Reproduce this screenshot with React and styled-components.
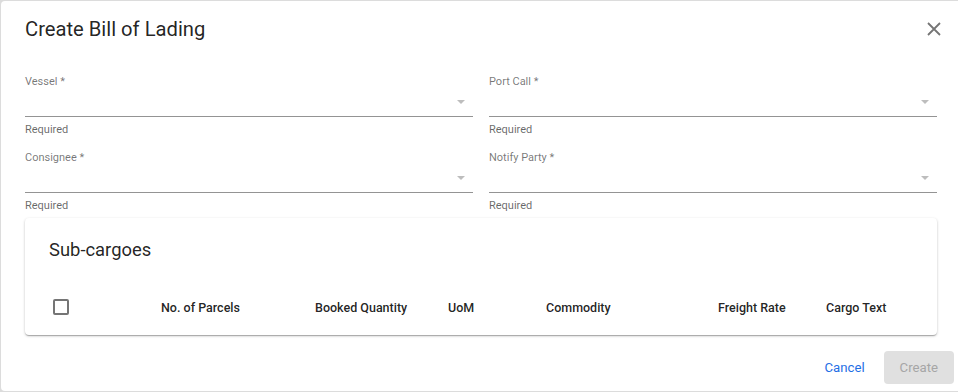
import React from "react";
import styled, { createGlobalStyle } from "styled-components";

const GlobalStyle = createGlobalStyle`
  html, body {
    margin: 0;
    padding: 0;
    background: #dcdcdc;
    overflow: hidden;
    font-family: Roboto, "Liberation Sans", sans-serif;
  }
`;

const Dialog = styled.div`
  margin: 1px 0 0 1px;
  width: 961px;
  height: 390px;
  background: #fff;
  border-radius: 4px;
  box-sizing: border-box;
  display: flex;
  flex-direction: column;
`;

const Header = styled.div`
  display: flex;
  align-items: center;
  justify-content: space-between;
  padding: 16px 24px;
`;

const Title = styled.h2`
  margin: 0;
  font-size: 20.2px;
  line-height: 24px;
  font-weight: 400;
  color: rgba(0, 0, 0, 0.87);
`;

const CloseButton = styled.button`
  border: 0;
  background: none;
  padding: 0;
  margin-right: -8px;
  width: 24px;
  height: 24px;
  display: flex;
  align-items: center;
  justify-content: center;
  cursor: pointer;
`;

const Content = styled.div`
  padding: 17px 24px 8px;
`;

const FieldGrid = styled.div`
  display: grid;
  grid-template-columns: 1fr 1fr;
  column-gap: 16px;
  row-gap: 13px;
  width: 912px;
`;

const Field = styled.div`
  display: flex;
  flex-direction: column;
`;

const Label = styled.label`
  font-size: 11px;
  line-height: 16px;
  color: rgba(0, 0, 0, 0.54);
`;

const SelectBox = styled.div`
  position: relative;
  height: 26px;
  border-bottom: 1px solid rgba(0, 0, 0, 0.42);
`;

const Arrow = styled.span`
  position: absolute;
  right: 8px;
  top: 10px;
  width: 0;
  height: 0;
  border-left: 4px solid transparent;
  border-right: 4px solid transparent;
  border-top: 4px solid #bdbdbd;
`;

const Helper = styled.span`
  margin-top: 6px;
  font-size: 11px;
  line-height: 14px;
  color: rgba(0, 0, 0, 0.6);
`;

const Card = styled.div`
  margin-top: 5px;
  width: 912px;
  background: #fff;
  border-radius: 4px;
  box-shadow: 0 1px 3px rgba(0, 0, 0, 0.2), 0 1px 1px rgba(0, 0, 0, 0.14),
    0 2px 1px -1px rgba(0, 0, 0, 0.12);
`;

const CardTitle = styled.h3`
  margin: 0;
  padding: 20px 24px 0;
  font-size: 18.4px;
  line-height: 24px;
  font-weight: 400;
  color: rgba(0, 0, 0, 0.87);
`;

const HeadRow = styled.div`
  margin-top: 17px;
  height: 56px;
  display: grid;
  grid-template-columns: 120px 154px 133px 98px 172px 108px 1fr;
  align-items: center;
`;

const HeadCell = styled.div`
  padding: 0 16px;
  font-size: 12.5px;
  font-weight: 500;
  color: rgba(0, 0, 0, 0.87);
  white-space: nowrap;
`;

const CheckCell = styled.div`
  padding-left: 28px;
  display: flex;
  align-items: center;
`;

const CheckBox = styled.span`
  width: 16px;
  height: 16px;
  box-sizing: border-box;
  border: 2px solid #757575;
  border-radius: 2px;
`;

const Footer = styled.div`
  display: flex;
  justify-content: flex-end;
  gap: 7px;
  padding: 8px;
`;

const Button = styled.button`
  min-width: 64px;
  height: 33px;
  padding: 0 ${(p) => (p.$filled ? "16px" : "8px")};
  border: 0;
  border-radius: 4px;
  font-family: Roboto, "Liberation Sans", sans-serif;
  font-size: 13.2px;
  font-weight: 400;
  background: ${(p) => (p.$filled ? "#e0e0e0" : "transparent")};
  color: ${(p) => (p.$filled ? "#a6a6a6" : "#1f6fe5")};
  cursor: ${(p) => (p.$filled ? "default" : "pointer")};
`;

const fields = ["Vessel", "Port Call", "Consignee", "Notify Party"];
const columns = [
  "No. of Parcels",
  "Booked Quantity",
  "UoM",
  "Commodity",
  "Freight Rate",
  "Cargo Text",
];

const App = () => {
  return (
    <>
      <GlobalStyle />
      <Dialog>
        <Header>
          <Title>Create Bill of Lading</Title>
          <CloseButton aria-label="close">
            <svg width="14" height="14" viewBox="0 0 14 14">
              <path
                d="M1 1 L13 13 M13 1 L1 13"
                stroke="#757575"
                strokeWidth="1.8"
              />
            </svg>
          </CloseButton>
        </Header>
        <Content>
          <FieldGrid>
            {fields.map((f) => (
              <Field key={f}>
                <Label>{f} *</Label>
                <SelectBox>
                  <Arrow />
                </SelectBox>
                <Helper>Required</Helper>
              </Field>
            ))}
          </FieldGrid>
          <Card>
            <CardTitle>Sub-cargoes</CardTitle>
            <HeadRow>
              <CheckCell>
                <CheckBox />
              </CheckCell>
              {columns.map((c) => (
                <HeadCell key={c}>{c}</HeadCell>
              ))}
            </HeadRow>
          </Card>
        </Content>
        <Footer>
          <Button>Cancel</Button>
          <Button $filled disabled>
            Create
          </Button>
        </Footer>
      </Dialog>
    </>
  );
};

export default App;
